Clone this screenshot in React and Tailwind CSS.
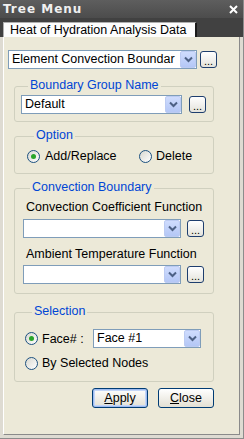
import React from "react";

function Chevron() {
  return (
    <svg width="9" height="7" viewBox="0 0 9 7">
      <path d="M1 1.5 L4.5 5 L8 1.5" fill="none" stroke="#4d6185" strokeWidth="2" />
    </svg>
  );
}

function Combo({ w, text }) {
  return (
    <div className={`flex h-[19px] ${w} shrink-0 items-center border border-[#7f9db9] bg-white`}>
      <span className="flex-1 overflow-hidden whitespace-nowrap pl-[3px] text-[12.5px] leading-[15px] text-black">
        {text}
      </span>
      <div className="flex h-[17px] w-[16px] shrink-0 items-center justify-center rounded-[2px] border border-[#bccbf2] bg-gradient-to-b from-[#cfdcfd] to-[#b4c7f6]">
        <Chevron />
      </div>
    </div>
  );
}

function Dots() {
  return (
    <div className="flex h-[17px] w-[17px] shrink-0 items-end justify-center rounded-[3px] border border-[#1e3e6e] bg-gradient-to-b from-white to-[#e4e3dc] pb-[2px]">
      <span className="text-[11px] leading-[8px] text-black">...</span>
    </div>
  );
}

function Radio({ checked }) {
  return (
    <div className="flex h-[13px] w-[13px] shrink-0 items-center justify-center rounded-full border border-[#1c5180] bg-gradient-to-br from-[#d8d8d0] to-white">
      {checked && <div className="h-[5px] w-[5px] rounded-full bg-[#2aa52a]" />}
    </div>
  );
}

function Group({ title, className, children }) {
  return (
    <fieldset className={`ml-[10px] w-[200px] rounded-[3px] border border-[#d0d0bf] ${className}`}>
      <legend className="ml-[7px] px-[2px] pb-[3px] text-[12.5px] leading-[14px] text-[#0046d5]">
        {title}
      </legend>
      {children}
    </fieldset>
  );
}

function Btn({ first, rest, def }) {
  return (
    <div
      className={`flex h-[20px] w-[56px] items-center justify-center rounded-[3px] border border-[#003c74] bg-gradient-to-b from-white to-[#e3e0d4] text-[12.5px] leading-[14px] text-black ${
        def ? "shadow-[inset_0_0_0_1px_#9ebbf0,inset_0_0_0_2px_#c4d6f8]" : ""
      }`}
    >
      <span>
        <span className="underline">{first}</span>
        {rest}
      </span>
    </div>
  );
}

export default function App() {
  return (
    <div className="flex h-[439px] w-[244px] flex-col border-r border-b border-[#8c8c8c] bg-[#dedbd2] font-['Liberation_Sans',Arial,sans-serif]">
      <div className="flex h-[18px] shrink-0 items-center justify-between bg-gradient-to-b from-[#5e5e5e] to-[#4c4c4c] pl-[3px] pr-[5px]">
        <span className="font-['DejaVu_Sans',sans-serif] text-[12px] font-bold leading-[14px] tracking-[1px] text-[#f0f0f0]">
          Tree Menu
        </span>
        <svg width="9" height="9" viewBox="0 0 9 9">
          <path d="M1 1 L8 8 M8 1 L1 8" stroke="#ffffff" strokeWidth="2" />
        </svg>
      </div>
      <div className="flex h-[19px] shrink-0 items-end bg-[#414141] pl-[3px]">
        <div className="flex h-[15px] w-[194px] items-center whitespace-nowrap border-l border-t border-[#b0b0b0] border-r-2 border-r-[#1a1a1a] bg-[#fdfdfd] pl-[6px] text-[12.5px] leading-[14px] text-black">
          Heat of Hydration Analysis Data
        </div>
      </div>
      <div className="flex flex-1 pl-[3px] pr-[3px] pb-[3px]">
        <div className="flex w-[237px] flex-col border-l border-l-white border-r border-r-[#8a8a8a] border-b border-b-[#8a8a8a] bg-[#ece9d8]">
          <div className="ml-[4px] mt-[13px] flex items-center gap-[3px]">
            <Combo w="w-[189px]" text="Element Convection Boundar" />
            <Dots />
          </div>

          <Group title="Boundary Group Name" className="mt-[9px] pb-[7px] pl-[6px]">
            <div className="flex items-center gap-[7px]">
              <Combo w="w-[161px]" text="Default" />
              <Dots />
            </div>
          </Group>

          <Group title="Option" className="mt-[6px] pb-[10px] pl-[12px] pt-[4px]">
            <div className="flex items-center text-[12.5px] leading-[14px] text-black">
              <div className="flex w-[112px] items-center gap-[5px]">
                <Radio checked />
                <span>Add/Replace</span>
              </div>
              <div className="flex items-center gap-[4px]">
                <Radio />
                <span>Delete</span>
              </div>
            </div>
          </Group>

          <Group title="Convection Boundary" className="mt-[6px] pb-[9px] pl-[8px] pt-[3px]">
            <div className="pl-[3px] text-[12.5px] leading-[14px] text-black">Convection Coefficient Function</div>
            <div className="mt-[5px] flex items-center gap-[6px]">
              <Combo w="w-[158px]" text="" />
              <Dots />
            </div>
            <div className="mt-[9px] pl-[3px] text-[12.5px] leading-[14px] text-black">Ambient Temperature Function</div>
            <div className="mt-[4px] flex items-center gap-[6px]">
              <Combo w="w-[158px]" text="" />
              <Dots />
            </div>
          </Group>

          <Group title="Selection" className="mt-[10px] pb-[11px] pl-[10px] pt-[8px]">
            <div className="flex items-center text-[12.5px] leading-[14px] text-black">
              <div className="flex w-[68px] items-center gap-[4px]">
                <Radio checked />
                <span>Face# :</span>
              </div>
              <Combo w="w-[108px]" text="Face #1" />
            </div>
            <div className="mt-[8px] flex items-center gap-[4px] text-[12.5px] leading-[14px] text-black">
              <Radio />
              <span>By Selected Nodes</span>
            </div>
          </Group>

          <div className="ml-[10px] mt-[6px] flex w-[200px] justify-end gap-[10px]">
            <Btn first="A" rest="pply" def />
            <Btn first="C" rest="lose" />
          </div>
        </div>
      </div>
    </div>
  );
}
